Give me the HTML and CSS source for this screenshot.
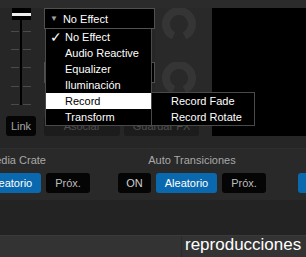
FILE: index.html
```html
<!DOCTYPE html>
<html>
<head>
<meta charset="utf-8">
<link rel="stylesheet" href="styles.css">
</head>
<body>
<div class="app">
  <div class="topstrip"></div>
  <div class="deck">
    <div class="fadercol">
      <svg class="fader" width="44" height="100" viewBox="0 0 44 100">
        <g stroke="#4a4a4a" stroke-width="1">
          <line x1="11" y1="23.5" x2="19" y2="23.5"/><line x1="23" y1="23.5" x2="31" y2="23.5"/>
          <line x1="11" y1="41.5" x2="19" y2="41.5"/><line x1="23" y1="41.5" x2="31" y2="41.5"/>
          <line x1="11" y1="59.5" x2="19" y2="59.5"/><line x1="23" y1="59.5" x2="31" y2="59.5"/>
          <line x1="11" y1="78.5" x2="19" y2="78.5"/><line x1="23" y1="78.5" x2="31" y2="78.5"/>
          <line x1="11" y1="96.5" x2="19" y2="96.5"/><line x1="23" y1="96.5" x2="31" y2="96.5"/>
        </g>
        <rect x="20" y="12" width="2" height="85" fill="#000"/>
        <rect x="12" y="0" width="19" height="12" fill="#000"/>
        <rect x="12" y="5" width="19" height="3" fill="#eee"/>
      </svg>
      <div class="btn link">Link</div>
    </div>
    <div class="fxcol">
      <div class="slot">
        <div class="dropdown">
          <span class="tri">▼</span><span class="ddtext">No Effect</span>
          <div class="menu">
            <div class="item"><span class="check">✓</span>No Effect</div>
            <div class="item">Audio Reactive</div>
            <div class="item">Equalizer</div>
            <div class="item">Iluminación</div>
            <div class="item active">Record
              <div class="submenu">
                <div class="item">Record Fade</div>
                <div class="item">Record Rotate</div>
              </div>
            </div>
            <div class="item">Transform</div>
          </div>
        </div>
        <svg class="knob" width="57" height="54" viewBox="0 0 57 54"><path d="M18.51 27.78 A13 13 0 1 1 29.49 27.78" fill="none" stroke="#353535" stroke-width="8"/></svg>
      </div>
      <div class="slot">
        <div class="dropdown"></div>
        <svg class="knob" width="57" height="54" viewBox="0 0 57 54"><path d="M18.51 27.78 A13 13 0 1 1 29.49 27.78" fill="none" stroke="#353535" stroke-width="8"/></svg>
      </div>
      <div class="fxbtns">
        <div class="btn dim asociar">Asociar</div>
        <div class="btn dim guardar">Guardar FX</div>
      </div>
    </div>
    <div class="screen"></div>
  </div>
  <div class="gap"></div>
  <div class="mixer">
    <div class="group g1">
      <div class="label">Media Crate</div>
      <div class="row">
        <div class="btn black on">ON</div>
        <div class="btn blue ale">Aleatorio</div>
        <div class="btn black prox">Próx.</div>
      </div>
    </div>
    <div class="group g2">
      <div class="label">Auto Transiciones</div>
      <div class="row">
        <div class="btn black on">ON</div>
        <div class="btn blue ale">Aleatorio</div>
        <div class="btn black prox">Próx.</div>
      </div>
    </div>
    <div class="group g3">
      <div class="label">&nbsp;</div>
      <div class="row">
        <div class="btn blue ale"></div>
      </div>
    </div>
  </div>
  <div class="spacer"></div>
  <div class="bottombar">
    <div class="bbleft"></div>
    <div class="bbtext">reproducciones</div>
  </div>
</div>
</body>
</html>
```
FILE: styles.css
```css
html, body {
  margin: 0;
  padding: 0;
  background: #262626;
  overflow: hidden;
}
body {
  width: 306px;
  height: 257px;
  font-family: "Liberation Sans", Arial, sans-serif;
  font-size: 11px;
}
.app {
  width: 306px;
  height: 257px;
  display: flex;
  flex-direction: column;
  overflow: hidden;
}
.topstrip {
  height: 8px;
  background: #2b2b2b;
  flex: none;
}
.deck {
  display: flex;
  height: 128px;
  flex: none;
}
.fadercol {
  width: 44px;
  flex: none;
  display: flex;
  flex-direction: column;
}
.fader {
  display: block;
  height: 100px;
}
.btn {
  box-sizing: border-box;
  height: 20px;
  line-height: 20px;
  border-radius: 3px;
  text-align: center;
  font-size: 11px;
  white-space: nowrap;
}
.link {
  margin: 8px 0 0 6px;
  width: 30px;
  background: #050505;
  color: #a6a6a6;
}
.fxcol {
  width: 168px;
  flex: none;
  display: flex;
  flex-direction: column;
}
.slot {
  height: 54px;
  display: flex;
  align-items: flex-start;
}
.dropdown {
  position: relative;
  box-sizing: border-box;
  width: 111px;
  height: 21px;
  background: #000;
  border: 1px solid #505050;
  color: #fff;
  display: flex;
  align-items: center;
  z-index: 1;
}
.slot:first-child .dropdown { z-index: 5; }
.tri {
  font-size: 8px;
  color: #a0a0a0;
  margin: 0 5px 0 5px;
}
.ddtext { font-size: 11px; }
.knob {
  display: block;
  flex: none;
  background: #292929;
  width: 57px;
  height: 54px;
}
.fxbtns {
  display: flex;
  gap: 4px;
  height: 20px;
}
.dim {
  background: #1c1c1c;
  color: #4e4e4e;
}
.asociar { width: 76px; }
.guardar { width: 75px; }
.screen {
  flex: 1;
  background: #000;
}
.menu {
  position: absolute;
  left: 0;
  top: 20px;
  width: 107px;
  box-sizing: border-box;
  background: #000;
  border-left: 1px solid #4a4a4a;
  border-right: 1px solid #4a4a4a;
  border-bottom: 1px solid #4a4a4a;
}
.item {
  position: relative;
  height: 16px;
  line-height: 16px;
  padding-left: 19px;
  color: #fff;
  font-size: 11px;
  white-space: nowrap;
}
.item.active {
  background: #fff;
  color: #000;
}
.check {
  position: absolute;
  left: 4px;
  top: 0;
  font-size: 14px;
  color: #fff;
}
.submenu {
  position: absolute;
  left: 105px;
  top: -1px;
  width: 104px;
  box-sizing: border-box;
  background: #000;
  border: 1px solid #4a4a4a;
}
.gap {
  height: 12px;
  flex: none;
}
.mixer {
  flex: none;
  height: 52px;
  box-sizing: border-box;
  border-top: 1px solid #2e2e2e;
  background: #292929;
  padding-top: 5px;
  display: flex;
}
.group {
  display: flex;
  flex-direction: column;
  flex: none;
}
.g1 { margin-left: -58px; width: 148px; }
.g2 { margin-left: 28px; width: 148px; }
.g3 { margin-left: 32px; width: 148px; }
.label {
  height: 13px;
  line-height: 13px;
  text-align: center;
  color: #a8a8a8;
  font-size: 11px;
  margin-bottom: 6px;
}
.row {
  display: flex;
  gap: 5px;
}
.black { background: #050505; color: #bdbdbd; }
.blue { background: #0a69ae; color: #fff; }
.on { width: 33px; color: #cfcfcf; }
.ale { width: 61px; }
.prox { width: 44px; }
.spacer {
  flex: none;
  height: 35px;
  background: #232323;
}
.bottombar {
  flex: 1;
  background: #333;
  border-top: 1px solid #3a3a3a;
  display: flex;
}
.bbleft {
  width: 181px;
  border-right: 1px solid #2a2a2a;
  flex: none;
}
.bbtext {
  padding-left: 3px;
  color: #fff;
  font-size: 17px;
  line-height: 21px;
  margin-top: -2px;
}
```
